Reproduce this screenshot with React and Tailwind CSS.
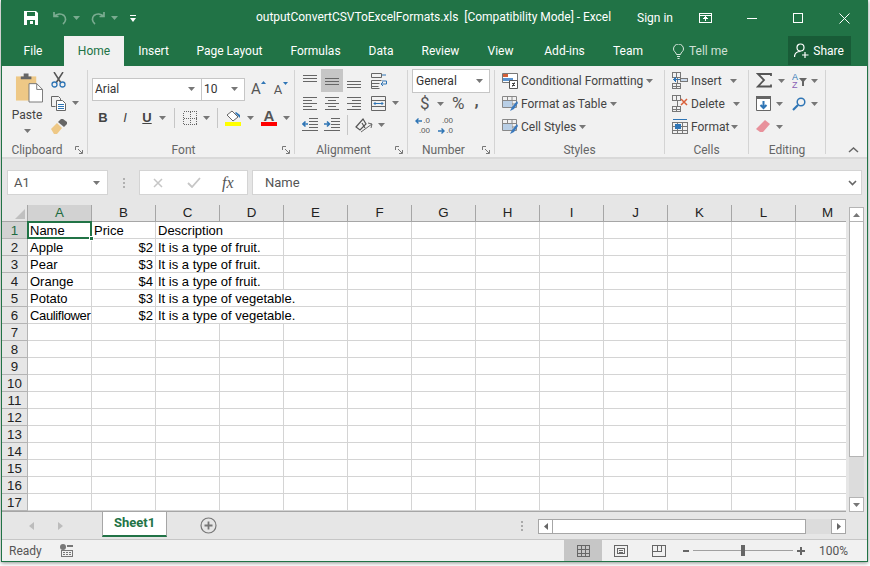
import React from 'react';

const UI = { fontFamily: '"Roboto", "Open Sans", sans-serif' };
const ARIAL = { fontFamily: '"Liberation Sans", Arial, sans-serif' };

const Caret = ({ className = '', color = '#777' }) => (
  <svg width="7" height="4" viewBox="0 0 7 4" className={`shrink-0 ${className}`}>
    <path d="M0 0h7L3.500 4z" fill={color} />
  </svg>
);

// Small ribbon icons
const Lines = ({ kind }) => {
  const rows = {
    top: [[0, 14, 2], [0, 14, 5], [0, 14, 8]],
    middle: [[0, 14, 5], [0, 14, 8], [0, 14, 11]],
    bottom: [[0, 14, 8], [0, 14, 11], [0, 14, 14]],
    left: [[0, 14, 2], [0, 9, 5], [0, 14, 8], [0, 9, 11], [0, 14, 14]],
    center: [[0, 14, 2], [3, 11, 5], [0, 14, 8], [3, 11, 11], [0, 14, 14]],
    right: [[0, 14, 2], [5, 14, 5], [0, 14, 8], [5, 14, 11], [0, 14, 14]],
  }[kind];
  return (
    <svg width="14" height="16" viewBox="0 0 14 16" shapeRendering="crispEdges">
      {rows.map(([a, b, y]) => <path key={`${a}-${y}`} d={`M${a} ${y + 0.5}H${b}`} stroke="#666" />)}
    </svg>
  );
};

const Wrap = () => (
  <svg width="16" height="16" viewBox="0 0 16 16" fill="none">
    <path d="M.5.500h10v4H.5zM.5 7.500h10M.5 10.500h8M.5 13.500h7M.5 7.500v8h8" stroke="#666" />
    <path d="M11 2h4M11 8h4.500v3H11" stroke="#2f75b5" />
    <path d="M12 9l-2 2 2 2" stroke="#2f75b5" />
  </svg>
);

const Merge = () => (
  <svg width="15" height="15" viewBox="0 0 15 15" fill="none">
    <path d="M.5.500h14v14H.5zM.5 4.500h14M.5 10.500h14" stroke="#666" />
    <path d="M3 7.500h9M4.500 6L3 7.500 4.500 9M10.500 6L12 7.500 10.500 9" stroke="#2f75b5" />
  </svg>
);

const Indent = ({ flip }) => (
  <svg width="16" height="14" viewBox="0 0 16 14" fill="none">
    <path d="M7 .5h9M7 3.500h9M7 6.500h9M7 9.500h9M0 12.500h16" stroke="#666" />
    {flip
      ? <path d="M0 6h5M3 3.500L5.500 6 3 8.500" stroke="#2f75b5" strokeWidth="1.600" />
      : <path d="M6 6H1M3.500 3.500L1 6l2.500 2.500" stroke="#2f75b5" strokeWidth="1.600" />}
  </svg>
);

const Arrow = ({ flip }) => (
  <svg width="7" height="6" viewBox="0 0 7 6" fill="none" className={`shrink-0 ${flip ? '-scale-x-100' : ''}`}>
    <path d="M7 3H1M3.500.5L1 3l2.500 2.500" stroke="#2f75b5" strokeWidth="1.400" />
  </svg>
);

const StyleIcon = ({ cond }) => (
  <svg width="16" height="16" viewBox="0 0 16 16" fill="none">
    {cond ? (
      <>
        <path d="M.5.500h15v9h-15z" fill="#fff" stroke="#777" />
        <path d="M1 1h5v3H1z" fill="#d2603a" />
        <path d="M6 5h5v3H6zM1 5h5v3H1z" fill="#5a94d0" />
        <path d="M7.500 7.500h8v8h-8z" fill="#fff" stroke="#555" />
        <path d="M10 10.500h3M10 12.500h3M12.500 9.500l-2 4" stroke="#444" />
      </>
    ) : (
      <>
        <path d="M.5.500h14v11H.5zM.5 4.500h14M.5 8h14M5.500 1v11M10 1v11" stroke="#888" />
        <path d="M1 5h9v6H1z" fill="#b9cfe6" />
        <path d="M15 5l-5 6-2 4 4-2 4-6z" fill="#3a79bd" />
      </>
    )}
  </svg>
);

const CellIcon = ({ kind }) => (
  <svg width="16" height="17" viewBox="0 0 16 17" fill="none" shapeRendering="crispEdges">
    {kind === 'format' ? (
      <>
        <path d="M1 1.500h14" stroke="#2f75b5" />
        <path d="M.5 4.500h15v11H.5zM.5 8h15M.5 12h15M5.500 5v11M10.500 5v11" stroke="#777" />
        <path d="M3 6h6v5H3z" fill="#2f75b5" />
      </>
    ) : (
      <>
        <path d="M.5.500h8v5H.5zM.5 11.500h8v5H.5zM4.500 1v5M4.500 12v5M.5 14h8" stroke="#777" />
        <path d="M5.500 6v5" stroke="#777" />
        {kind === 'insert' ? (
          <>
            <path d="M8 6h7v3H8z" fill="#c9d9ea" stroke="#777" />
            <path d="M8 7.500H2M4 5.500l-2 2 2 2" stroke="#2f75b5" strokeWidth="1.500" />
          </>
        ) : (
          <path d="M9 4l6 6M15 4l-6 6" stroke="#d9603a" strokeWidth="1.500" shapeRendering="auto" />
        )}
      </>
    )}
  </svg>
);

const Launcher = () => (
  <svg width="8" height="8" viewBox="0 0 8 8" fill="none" className="absolute right-[4px] bottom-[0px]">
    <path d="M.5 4V.5H4M3 3l4 4M4 7.500h3.500V4" stroke="#777" />
  </svg>
);

const Group = ({ label, launcher, className, children }) => (
  <div className={`relative flex flex-col shrink-0 border-r border-[#d4d4d4] mt-[4px] mb-[3px] ${className}`}>
    <div className="flex-1 min-h-0">{children}</div>
    <div className={`h-[10px] text-center text-[12px] leading-[12px] text-[#666] ${launcher ? 'pr-[15px]' : ''}`}>{label}</div>
    {launcher && <Launcher />}
  </div>
);

const StyleRow = ({ cond, label, caretClass = 'ml-[3px]' }) => (
  <div className="h-[23px] flex items-center text-[12px] text-[#444]">
    <StyleIcon cond={cond} />
    <span className="ml-[3px]">{label}</span>
    <Caret className={caretClass} />
  </div>
);

const CellRow = ({ kind, label, caretClass }) => (
  <div className="h-[23px] flex items-center text-[12px] text-[#444]">
    <CellIcon kind={kind} />
    <span className="ml-[3px]">{label}</span>
    <Caret className={caretClass} />
  </div>
);

const Ribbon = () => (
  <div className="h-[93px] shrink-0 bg-[#f1f1f1] border-b-2 border-[#d9d9d9] flex text-[#444] pl-0">
    {/* Clipboard */}
    <Group label="Clipboard" launcher className="w-[86px]">
      <div className="flex pl-[13px]">
        <div className="w-[28px] flex flex-col items-center">
          <svg width="28" height="30" viewBox="0 0 29 30" className="mt-[3px]">
            <path d="M1 3h21v25H1z" fill="#eec886" />
            <path d="M6 3h11v3H6zM9 0h5v3H9z" fill="#666" />
            <path d="M14.500 10.500h8l6 6v13h-14z" fill="#fff" stroke="#777" />
            <path d="M22.500 10.500v6h6" fill="none" stroke="#777" />
          </svg>
          <span className="text-[12px] leading-[16px] mt-[4px] -translate-x-[2px]">Paste</span>
          <Caret className="mt-[6px] -translate-x-[2px]" />
        </div>
        <div className="ml-[8px] flex flex-col">
          <div className="h-[20px] flex items-center">
            <svg width="15" height="16" viewBox="0 0 15 16" fill="none">
              <path d="M3 0l7 11M12 0L5 11" stroke="#555" strokeWidth="1.500" />
              <circle cx="3.500" cy="12.500" r="2.500" stroke="#2f75b5" strokeWidth="1.300" />
              <circle cx="11.500" cy="12.500" r="2.500" stroke="#2f75b5" strokeWidth="1.300" />
            </svg>
          </div>
          <div className="h-[26px] flex items-center">
            <svg width="15" height="15" viewBox="0 0 15 15" fill="none">
              <path d="M.5.500h7l2 2V4M.5.500v10h4" stroke="#666" />
              <path d="M5.500 4.500h6l3 3v7h-9z" fill="#fff" stroke="#666" />
              <path d="M7 8.500h6M7 10.500h6M7 12.500h6" stroke="#2f75b5" />
            </svg>
            <Caret className="ml-[6px]" />
          </div>
          <div className="h-[20px] flex items-center">
            <svg width="17" height="15" viewBox="0 0 17 15">
              <path d="M0 10l6-6 5 5-5 6H3z" fill="#eec886" />
              <path d="M7 3l3-3h2l4 3v2l-3 3z" fill="#666" />
            </svg>
          </div>
        </div>
      </div>
    </Group>

    {/* Font */}
    <Group label="Font" launcher className="w-[207px]">
      <div className="pl-[4px] pt-[7px] flex items-center h-[31px]">
        <div className="w-[110px] h-[23px] bg-white border border-[#c6c6c6] flex items-center justify-between pl-[2px] pr-[6px] text-[12px] text-[#333]">
          <span>Arial</span><Caret />
        </div>
        <div className="w-[43px] h-[23px] bg-white border border-l-0 border-[#c6c6c6] flex items-center justify-between pl-[2px] pr-[6px] text-[12px] text-[#333]">
          <span>10</span><Caret />
        </div>
        <span className="ml-[6px] text-[15px] relative text-[#555]">A
          <svg width="5" height="3" viewBox="0 0 5 3" className="absolute -right-[5px] top-[3px]"><path d="M0 3l2.500-3L5 3z" fill="#2f75b5" /></svg>
        </span>
        <span className="ml-[13px] text-[13px] mt-[2px] relative text-[#555]">A
          <svg width="5" height="3" viewBox="0 0 5 3" className="absolute -right-[6px] top-[2px]"><path d="M0 0l2.500 3L5 0z" fill="#2f75b5" /></svg>
        </span>
      </div>
      <div className="flex items-center h-[24px] mt-[5px] pl-[10px]">
        <span className="w-[10px] text-[13px] font-bold text-center" style={ARIAL}>B</span>
        <span className="w-[10px] ml-[12px] text-[13px] italic text-center" style={ARIAL}>I</span>
        <span className="w-[10px] ml-[12px] text-[13px] font-bold underline text-center" style={ARIAL}>U</span>
        <Caret className="ml-[7px]" />
        <div className="w-px h-[20px] bg-[#c6c6c6] ml-[8px]" />
        <svg width="14" height="14" viewBox="0 0 14 14" className="ml-[8px]" fill="none" shapeRendering="crispEdges">
          <path d="M.5.500h13v13H.5zM7 1v13M1 7h13" stroke="#666" strokeDasharray="1 1" />
        </svg>
        <Caret className="ml-[6px]" />
        <div className="w-px h-[20px] bg-[#c6c6c6] ml-[7px]" />
        <div className="ml-[7px] w-[16px] flex flex-col items-center">
          <svg width="16" height="12" viewBox="0 0 16 12">
            <path d="M7 1l6 6-5 4-6-6z" fill="#fff" stroke="#666" />
            <path d="M11 2l4 3v3l-5-5z" fill="#2f75b5" />
          </svg>
          <div className="w-[16px] h-[4px] bg-[#ffff00]" />
        </div>
        <Caret className="ml-[6px]" />
        <div className="ml-[7px] w-[16px] flex flex-col items-center">
          <span className="text-[15px] leading-[12px] font-bold text-[#555]" style={ARIAL}>A</span>
          <div className="w-[16px] h-[4px] bg-[#ff0000]" />
        </div>
        <Caret className="ml-[6px]" />
      </div>
    </Group>

    {/* Alignment */}
    <Group label="Alignment" launcher className="w-[113px]">
      <div className="flex items-center h-[23px] pl-[8px] mt-[-1px]">
        <div className="w-[14px]"><Lines kind="top" /></div>
        <div className="w-[22px] h-[23px] ml-[4px] bg-[#c6c6c6] flex items-center justify-center"><Lines kind="middle" /></div>
        <div className="w-[14px] ml-[4px]"><Lines kind="bottom" /></div>
        <div className="ml-[10px]"><Wrap /></div>
      </div>
      <div className="flex items-center h-[22px] pl-[8px]">
        <Lines kind="left" />
        <div className="ml-[8px]"><Lines kind="center" /></div>
        <div className="ml-[8px]"><Lines kind="right" /></div>
        <div className="ml-[10px]"><Merge /></div>
        <Caret className="ml-[6px]" />
      </div>
      <div className="flex items-center h-[22px] pl-[7px]">
        <Indent />
        <div className="ml-[6px]"><Indent flip /></div>
        <div className="w-px h-[20px] bg-[#c6c6c6] ml-[7px]" />
        <svg width="18" height="16" viewBox="0 0 18 16" fill="none" className="ml-[7px]">
          <path d="M1 10l7-8 3 5-6 6zM7 6l3 5" stroke="#555" strokeWidth="1.200" />
          <path d="M6 15l11-8M13 6l4 1-1 4" stroke="#666" />
        </svg>
        <Caret className="ml-[5px]" />
      </div>
    </Group>

    {/* Number */}
    <Group label="Number" launcher className="w-[87px]">
      <div className="pl-[4px] mt-[-1px]">
        <div className="w-[78px] h-[24px] bg-white border border-[#c6c6c6] flex items-center justify-between pl-[3px] pr-[6px] text-[12px] text-[#333]">
          <span>General</span><Caret />
        </div>
      </div>
      <div className="flex items-center h-[21px] pl-[12px] text-[#555]">
        <span className="text-[17px] w-[10px]">$</span>
        <Caret className="ml-[7px]" />
        <span className="text-[17px] ml-[8px]">%</span>
        <span className="text-[17px] font-bold ml-[10px] mt-[-5px]">,</span>
      </div>
      <div className="flex items-center h-[23px] pl-[7px] text-[#555]" style={ARIAL}>
        <div className="w-[15px] flex flex-col text-[8px] leading-[10px] items-end">
          <div className="flex items-center gap-px"><Arrow /><span>.0</span></div>
          <span>.00</span>
        </div>
        <div className="w-[16px] ml-[7px] flex flex-col text-[8px] leading-[10px] items-end">
          <span>.00</span>
          <div className="flex items-center gap-px"><Arrow flip /><span>.0</span></div>
        </div>
      </div>
    </Group>

    {/* Styles */}
    <Group label="Styles" className="w-[170px]">
      <div className="pl-[7px] -mt-px">
        <StyleRow cond label="Conditional Formatting" />
        <StyleRow label="Format as Table" />
        <StyleRow label="Cell Styles" />
      </div>
    </Group>

    {/* Cells */}
    <Group label="Cells" className="w-[84px]">
      <div className="pl-[7px] -mt-px">
        <CellRow kind="insert" label="Insert" caretClass="ml-[8px]" />
        <CellRow kind="delete" label="Delete" caretClass="ml-[8px]" />
        <CellRow kind="format" label="Format" caretClass="ml-[2px]" />
      </div>
    </Group>

    {/* Editing */}
    <Group label="Editing" className="w-[77px]">
      <div className="-mt-px pl-[7px]">
        <div className="h-[23px] flex items-center">
          <svg width="16" height="15" viewBox="0 0 16 15" fill="none"><path d="M15 3V1H2l6 6-6 6.500h13v-2" stroke="#555" strokeWidth="1.800" /></svg>
          <Caret className="ml-[6px]" />
          <svg width="15" height="17" viewBox="0 0 15 17" className="ml-[7px]" style={ARIAL}>
            <path d="M7 6h8l-3 3.500V14h-2V9.500z" fill="#666" />
            <text x="0" y="7.500" fontSize="9" fill="#2f75b5">A</text>
            <text x="0" y="16" fontSize="9" fill="#8a5fb5">Z</text>
          </svg>
          <Caret className="ml-[4px]" />
        </div>
        <div className="h-[23px] flex items-center">
          <svg width="15" height="15" viewBox="0 0 15 15" fill="none">
            <path d="M.5.500h14v14H.5z" fill="#fff" stroke="#666" />
            <path d="M0 0h15v3H0z" fill="#666" />
            <path d="M7.500 5v7M4.500 9l3 3 3-3" stroke="#2f75b5" strokeWidth="2" />
          </svg>
          <Caret className="ml-[5px]" />
          <svg width="14" height="14" viewBox="0 0 14 14" fill="none" className="ml-[9px]">
            <circle cx="9" cy="5" r="3.800" stroke="#2f75b5" strokeWidth="1.500" />
            <path d="M6 8l-5 5" stroke="#2f75b5" strokeWidth="2.200" />
          </svg>
          <Caret className="ml-[5px]" />
        </div>
        <div className="h-[23px] flex items-center">
          <svg width="14" height="13" viewBox="0 0 14 13"><path d="M9 0l5 4-7 8H4l-4-3z" fill="#e8919b" /></svg>
          <Caret className="ml-[6px]" />
        </div>
      </div>
    </Group>

    <div className="flex-1 relative">
      <svg width="11" height="6" viewBox="0 0 11 6" fill="none" className="absolute left-[22px] bottom-[4px]">
        <path d="M1 5l4.500-4L10 5" stroke="#666" strokeWidth="1.500" />
      </svg>
    </div>
  </div>
);

const columns = ['A', 'B', 'C', 'D', 'E', 'F', 'G', 'H', 'I', 'J', 'K', 'L', 'M'];
const data = [
  ['Name', 'Price', 'Description'],
  ['Apple', '$2', 'It is a type of fruit.'],
  ['Pear', '$3', 'It is a type of fruit.'],
  ['Orange', '$4', 'It is a type of fruit.'],
  ['Potato', '$3', 'It is a type of vegetable.'],
  ['Cauliflower', '$2', 'It is a type of vegetable.'],
];
const rowNumbers = Array.from({ length: 17 }, (_, i) => i + 1);

// long text in column C runs over the gridlines to its right
const spills = (n, c) => (c === 2 && n <= 6) || (c === 3 && (n === 5 || n === 6));

const Sheet = () => (
  <div className="relative w-[844px] h-[307px] shrink-0 overflow-hidden bg-white border-b border-[#a6a6a6] text-[13.33px] text-black" style={ARIAL}>
    <div className="grid grid-cols-[26px_repeat(13,64px)] grid-rows-[repeat(18,17px)] w-max">
      {/* corner */}
      <div className="relative bg-[#e6e6e6] border-r border-b border-[#a6a6a6]">
        <svg width="10" height="10" viewBox="0 0 10 10" className="absolute right-[2px] bottom-[2px]"><path d="M10 0v10H0z" fill="#c0c0c0" /></svg>
      </div>
      {columns.map((col, i) => (
        <div key={col} className={`flex items-center justify-center border-r border-b border-[#a6a6a6] ${i === 0 ? 'bg-[#d2d2d2] text-[#1e6b41] border-b-[#217346]' : 'bg-[#e6e6e6] text-[#222]'}`}>{col}</div>
      ))}
      {rowNumbers.map(n => (
        <React.Fragment key={n}>
          <div className={`flex items-center justify-center pt-px border-r border-b border-[#b4b4b4] ${n === 1 ? 'bg-[#d2d2d2] text-[#1e6b41]' : 'bg-[#e6e6e6] text-[#222]'}`}>{n}</div>
          {columns.map((col, c) => {
            const value = data[n - 1]?.[c] ?? '';
            const right = c === 1 && n > 1;
            return (
              <div key={col} className={`border-b border-[#d4d4d4] text-[13px] leading-[16px] pt-px whitespace-nowrap min-w-0 pl-[2px] ${spills(n, c) ? '' : 'border-r'} ${right ? 'text-right pr-[2px]' : ''} ${value === 'Cauliflower' ? 'tracking-[-0.35px]' : ''}`}>
                {value}
              </div>
            );
          })}
        </React.Fragment>
      ))}
    </div>
    {/* A1 selection */}
    <div className="absolute left-[25px] top-[16px] w-[65px] h-[18px] border-2 border-[#217346]" />
    <div className="absolute left-[87px] top-[31px] w-[5px] h-[5px] bg-[#217346] border border-white" />
  </div>
);

const VScroll = () => (
  <div className="w-[21px] shrink-0 pl-[3px] pr-[3px] flex flex-col">
    <div className="w-[15px] h-[15px] mt-[2px] bg-white border border-[#b4b4b4] flex items-center justify-center"><Caret className="rotate-180" /></div>
    <div className="w-[15px] h-[235px] bg-white border border-t-0 border-[#b4b4b4]" />
    <div className="w-[15px] flex-1 bg-[#dcdcdc]" />
    <div className="w-[15px] h-[15px] bg-white border border-[#b4b4b4] flex items-center justify-center"><Caret /></div>
  </div>
);

const SheetTabs = () => (
  <div className="h-[28px] shrink-0 bg-[#e6e6e6] flex border-b border-[#c6c6c6]">
    <div className="w-[100px] flex items-center text-[#c0c0c0] pl-[27px]">
      <svg width="5" height="8" viewBox="0 0 5 8"><path d="M5 0v8L0 4z" fill="#bcbcbc" /></svg>
      <svg width="5" height="8" viewBox="0 0 5 8" className="ml-[24px]"><path d="M0 0v8l5-4z" fill="#bcbcbc" /></svg>
    </div>
    <div className="w-[65px] h-[26px] bg-white border-x border-[#a6a6a6] border-b-2 border-b-[#217346] -mt-px flex items-center justify-center text-[13px] font-bold text-[#217346]">Sheet1</div>
    <div className="ml-[33px] flex items-center">
      <svg width="17" height="17" viewBox="0 0 17 17" fill="none">
        <circle cx="8.500" cy="8.500" r="7.500" stroke="#777" strokeWidth="1.200" />
        <path d="M8.500 4.500v8M4.500 8.500h8" stroke="#777" strokeWidth="1.800" />
      </svg>
    </div>
    <div className="ml-[304px] flex flex-col justify-center gap-[2px]">
      <div className="w-[2px] h-[2px] bg-[#aaa]" />
      <div className="w-[2px] h-[2px] bg-[#aaa]" />
      <div className="w-[2px] h-[2px] bg-[#aaa]" />
    </div>
    <div className="ml-[15px] mt-[7px] h-[15px] w-[308px] flex">
      <div className="w-[15px] bg-white border border-[#a6a6a6] flex items-center justify-center"><svg width="4" height="7" viewBox="0 0 4 7"><path d="M4 0v7L0 3.500z" fill="#666" /></svg></div>
      <div className="w-[253px] bg-white border-y border-r border-[#a6a6a6]" />
      <div className="w-[25px] bg-[#dcdcdc]" />
      <div className="w-[15px] bg-white border border-[#a6a6a6] flex items-center justify-center"><svg width="4" height="7" viewBox="0 0 4 7"><path d="M0 0v7l4-3.500z" fill="#666" /></svg></div>
    </div>
  </div>
);

const StatusBar = () => (
  <div className="flex-1 bg-[#f1f1f1] flex items-center text-[12px] text-[#555]">
    <span className="ml-[7px] w-[51px]">Ready</span>
    <svg width="13" height="13" viewBox="0 0 13 13" shapeRendering="crispEdges">
      <circle cx="3" cy="3" r="3" fill="#777" shapeRendering="auto" />
      <path d="M7 1h6v2H7zM1 6h12v1H1z" fill="#777" />
      <path d="M1.500 7v5.500h11V7" fill="none" stroke="#777" />
      <path d="M3 8h2v1H3zM6 8h2v1H6zM9 8h2v1H9zM3 10h2v1H3zM6 10h2v1H6zM9 10h2v1H9z" fill="#777" />
    </svg>
    <div className="ml-[491px] w-[38px] self-stretch bg-[#c6c6c6] flex items-center justify-center">
      <svg width="13" height="12" viewBox="0 0 13 12" fill="none" shapeRendering="crispEdges"><path d="M.5.500h12v11H.5zM4.500 1v11M8.500 1v11M1 4h12M1 8h12" stroke="#666" /></svg>
    </div>
    <svg width="14" height="12" viewBox="0 0 14 12" fill="none" className="ml-[12px]" shapeRendering="crispEdges"><path d="M.5.500h13v11H.5zM3.500 3.500h7v5h-7zM5 5.500h4M5 7.500h4" stroke="#666" /></svg>
    <svg width="14" height="12" viewBox="0 0 14 12" fill="none" className="ml-[24px]" shapeRendering="crispEdges"><path d="M.5.500h13v11H.5zM.5 6.500h9v-6M5 1v5" stroke="#666" /></svg>
    <div className="ml-[17px] w-[6px] h-[2px] bg-[#666]" />
    <div className="relative ml-[4px] w-[100px] h-px bg-[#a0a0a0]">
      <div className="absolute left-[48px] -top-[5px] w-[4px] h-[11px] bg-[#666]" />
    </div>
    <svg width="8" height="8" viewBox="0 0 8 8" className="ml-[4px]"><path d="M3 0h2v3h3v2H5v3H3V5H0V3h3z" fill="#666" /></svg>
    <span className="ml-[14px]">100%</span>
  </div>
);

export default function App() {
  return (
    <div className="w-[870px] h-[566px] bg-white overflow-hidden" style={UI}>
      <div className="ml-px w-[867px] h-[562px] border-x border-b border-[#217346] flex flex-col shadow-[0_1px_4px_rgba(0,0,0,0.45)]">
        {/* Title bar */}
        <div className="relative h-[36px] shrink-0 bg-[#217346] flex items-center text-white text-[12px]">
          <svg width="14" height="14" viewBox="0 0 14 14" className="ml-[22px]">
            <path d="M0 0h12l2 2v12H0z" fill="#fff" />
            <path d="M3 1h8v4H3z" fill="#217346" />
            <path d="M3 9h8v5H3z" fill="#217346" />
            <path d="M6 10h3v3H6z" fill="#fff" />
          </svg>
          <svg width="14" height="14" viewBox="0 0 14 14" fill="none" className="ml-[15px] opacity-40">
            <path d="M1 1v4.500h4.500M1.500 5C4 3 8 2 11 4.500c2.500 2.500 2 6-1 8.500" stroke="#fff" strokeWidth="1.700" />
          </svg>
          <Caret className="ml-[6px] opacity-40" color="#fff" />
          <svg width="14" height="14" viewBox="0 0 14 14" fill="none" className="ml-[11px] opacity-40 -scale-x-100">
            <path d="M1 1v4.500h4.500M1.500 5C4 3 8 2 11 4.500c2.500 2.500 2 6-1 8.500" stroke="#fff" strokeWidth="1.700" />
          </svg>
          <Caret className="ml-[6px] opacity-40" color="#fff" />
          <svg width="6" height="7" viewBox="0 0 6 7" className="ml-[12px]"><path d="M0 0h6v1H0zM0 3h6L3 7z" fill="#fff" /></svg>
          <div className="absolute left-[254px] top-[9px] whitespace-nowrap leading-[16px] tracking-[-0.03px]">outputConvertCSVToExcelFormats.xls&nbsp; [Compatibility Mode] - Excel</div>
          <span className="ml-auto mr-[26px]">Sign in</span>
          <svg width="13" height="10" viewBox="0 0 13 10" fill="none" shapeRendering="crispEdges"><path d="M.5.500h12v9H.5zM1 2.500h11M6.500 8V4M4.500 6l2-2 2 2" stroke="#fff" /></svg>
          <div className="ml-[35px] w-[10px] h-px bg-white" />
          <div className="ml-[36px] w-[10px] h-[10px] border border-white" />
          <svg width="11" height="11" viewBox="0 0 11 11" fill="none" className="ml-[36px] mr-[17px]"><path d="M.5.500l10 10M10.500.5l-10 10" stroke="#fff" /></svg>
        </div>

        {/* Tabs */}
        <div className="h-[30px] shrink-0 bg-[#217346] flex text-white text-[12px]">
          <div className="w-[62px] flex items-center justify-center pb-[1px]">File</div>
          <div className="w-[60px] bg-[#f1f1f1] text-[#217346] flex items-center justify-center">Home</div>
          <div className="w-[59px] flex items-center justify-center">Insert</div>
          <div className="w-[93px] flex items-center justify-center">Page Layout</div>
          <div className="w-[79px] flex items-center justify-center">Formulas</div>
          <div className="w-[52px] flex items-center justify-center">Data</div>
          <div className="w-[67px] flex items-center justify-center">Review</div>
          <div className="w-[53px] flex items-center justify-center">View</div>
          <div className="w-[75px] flex items-center justify-center">Add-ins</div>
          <div className="w-[52px] flex items-center justify-center">Team</div>
          <div className="ml-[19px] flex items-center">
            <svg width="11" height="15" viewBox="0 0 11 15" fill="none">
              <path d="M3.500 10.500C3 8 .5 7.500.5 5a5 5 0 0110 0c0 2.500-2.500 3-3 5.500zM4 12.500h3M4.500 14.500h2" stroke="#dce8e0" />
            </svg>
            <span className="ml-[5px] text-[#cfe0d6]">Tell me</span>
          </div>
          <div className="ml-[60px] w-[63px] h-[29px] bg-[#185c37] flex items-center justify-center">
            <svg width="15" height="15" viewBox="0 0 15 15" fill="none">
              <circle cx="6.500" cy="4.500" r="3.500" stroke="#fff" strokeWidth="1.200" />
              <path d="M.5 14c0-3.500 2.500-5.500 6-5.500M8 12h6.500M11 9v6" stroke="#fff" strokeWidth="1.200" />
            </svg>
            <span className="ml-[4px]">Share</span>
          </div>
        </div>

        <Ribbon />

        {/* Formula bar */}
        <div className="h-[46px] shrink-0 bg-[#e6e6e6] flex items-start pl-[5px] pt-[11px] text-[13px]">
          <div className="w-[101px] h-[25px] bg-white border border-[#d4d4d4] flex items-center justify-between pl-[6px] pr-[7px] text-[#555]">
            <span>A1</span><Caret />
          </div>
          <div className="ml-[15px] h-[25px] flex flex-col items-center justify-center gap-[2px]">
            <div className="w-[2px] h-[2px] bg-[#b0b0b0]" />
            <div className="w-[2px] h-[2px] bg-[#b0b0b0]" />
            <div className="w-[2px] h-[2px] bg-[#b0b0b0]" />
          </div>
          <div className="ml-[14px] w-[109px] h-[25px] bg-white border border-[#d4d4d4] flex items-center">
            <svg width="10" height="10" viewBox="0 0 10 10" fill="none" className="ml-[13px]"><path d="M1 1l8 8M9 1L1 9" stroke="#c6c6c6" strokeWidth="1.500" /></svg>
            <svg width="14" height="11" viewBox="0 0 14 11" fill="none" className="ml-[24px]"><path d="M1 6l4 4 8-9" stroke="#c6c6c6" strokeWidth="1.800" /></svg>
            <span className="ml-[21px] text-[16px] italic text-[#555]" style={{ fontFamily: '"Liberation Serif", serif' }}>fx</span>
          </div>
          <div className="ml-[4px] w-[610px] h-[25px] bg-white border border-[#d4d4d4] flex items-center justify-between pl-[12px] pr-[4px] text-[#555]">
            <span>Name</span>
            <svg width="9" height="6" viewBox="0 0 9 6" fill="none"><path d="M1 1l3.500 3.500L8 1" stroke="#666" strokeWidth="1.600" /></svg>
          </div>
        </div>

        {/* Worksheet */}
        <div className="flex h-[307px] shrink-0 bg-[#e6e6e6]">
          <Sheet />
          <VScroll />
        </div>

        <SheetTabs />
        <StatusBar />
      </div>
    </div>
  );
}
